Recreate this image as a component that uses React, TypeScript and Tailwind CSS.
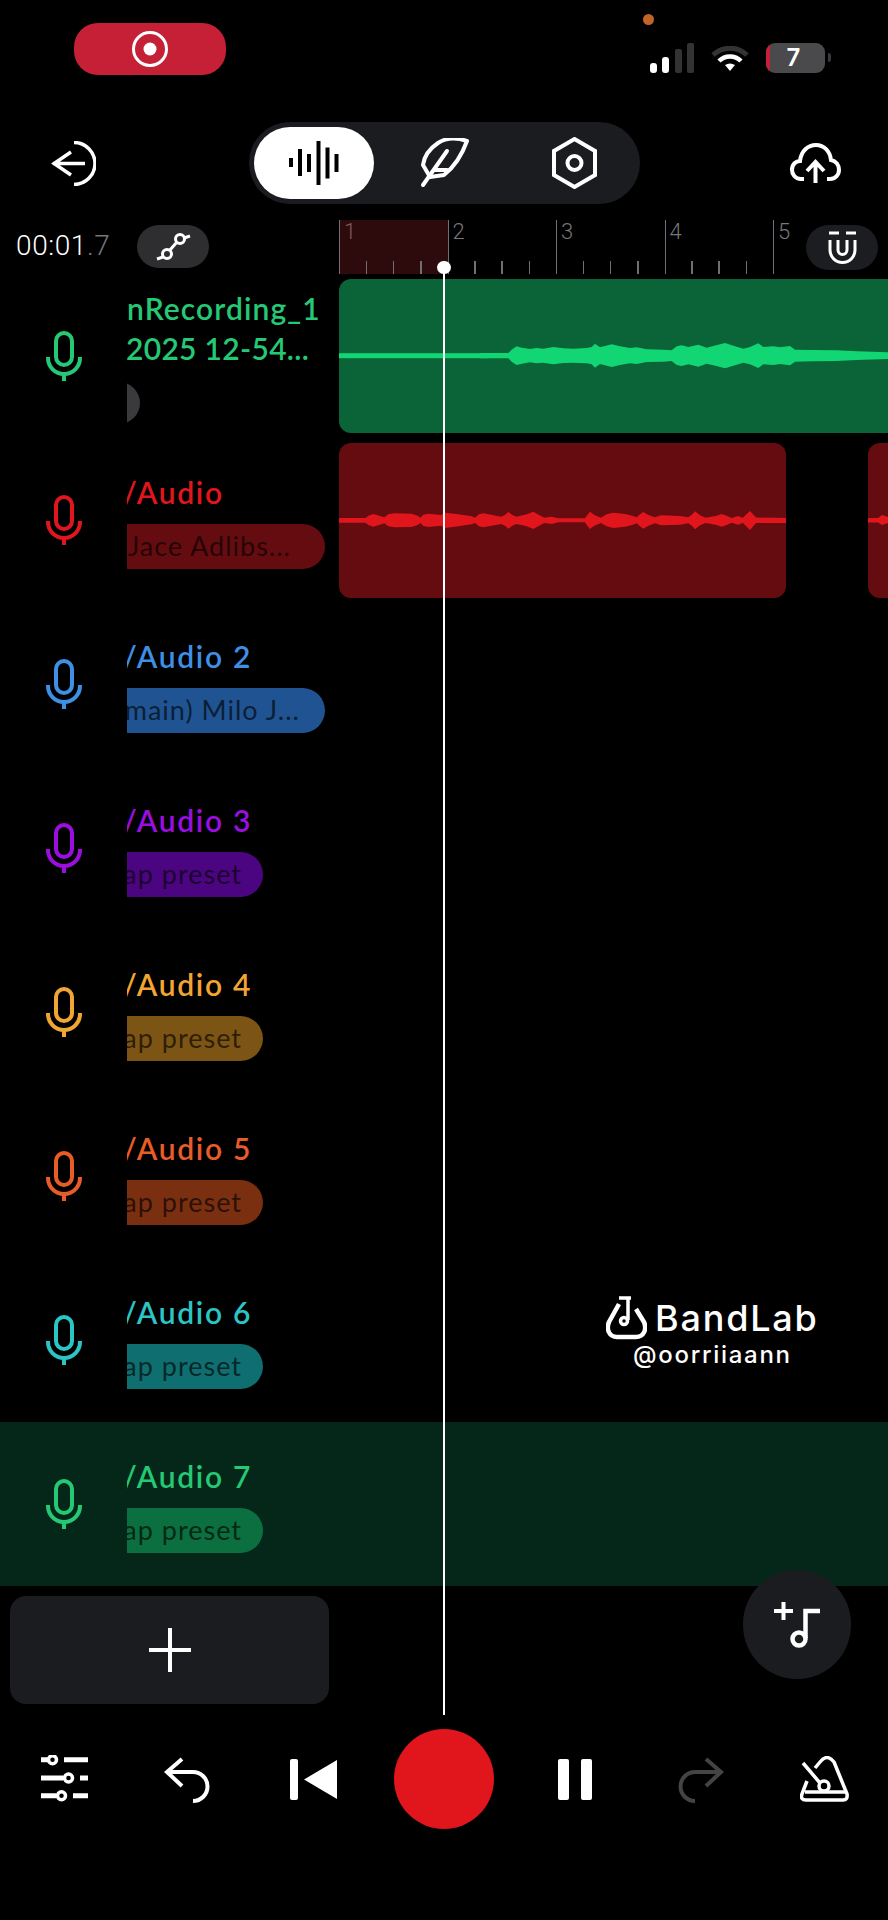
import React from "react";

type Pt = [number, number];

const greenWave: Pt[] = [[0,8],[85,8],[95,18],[110,28],[125,24],[150,20],[170,23],[190,21],[220,26],[250,22],[280,21],[320,23],[335,26],[345,36],[360,25],[375,29],[395,34],[420,28],[450,23],[470,25],[500,19],[550,18],[575,16],[590,28],[605,31],[625,26],[655,33],[680,24],[700,29],[735,38],[760,30],[790,21],[810,26],[835,37],[850,26],[880,28],[900,25],[930,29],[945,18],[1000,17],[1070,16],[1130,13],[1224,10]];
const redWave: Pt[] = [[12,7],[92,7],[100,14],[115,19],[132,14],[148,9],[160,18],[178,21],[230,20],[248,14],[256,8],[265,17],[280,20],[318,16],[330,23],[370,18],[410,12],[420,8],[432,18],[445,21],[498,11],[510,16],[520,25],[532,16],[545,11],[575,18],[595,26],[612,16],[628,8],[650,11],[670,6],[750,6],[757,16],[765,26],[778,16],[798,8],[815,18],[835,23],[870,19],[892,14],[905,9],[915,18],[925,25],[940,16],[960,9],[978,15],[1035,13],[1060,9],[1072,18],[1080,27],[1095,15],[1112,8],[1145,14],[1160,19],[1175,14],[1190,7],[1210,13],[1224,7]];

function envelope(pts: Pt[], ox: number, cy: number) {
  const top = pts.map(([x, h]) => `${ox + x / 3},${cy - h / 3}`);
  const bot = [...pts].reverse().map(([x, h]) => `${ox + x / 3},${cy + h / 3}`);
  return [...top, ...bot].join(" ");
}

function Mic({ color }: { color: string }) {
  return (
    <svg width="36" height="50" viewBox="0 0 36 50" fill="none" stroke={color} strokeWidth="4">
      <rect x="10" y="2" width="16" height="32" rx="8" />
      <path d="M2 26v1a16 16 0 0 0 32 0v-1" />
      <path d="M18 43v7" />
    </svg>
  );
}

const rows = [
  { title: ["nRecording_1", "2025 12-54..."], color: "#25c975", chip: "", chipBg: "#3a3a3c", chipW: "w-[42px] -ml-[29px]", pr: "" },
  { title: ["/Audio"], color: "#e0161c", chip: "Jace Adlibs...", chipBg: "#650c11", chipW: "w-[198px]", pr: "pr-[34px]" },
  { title: ["/Audio 2"], color: "#3f8fe4", chip: "main) Milo J...", chipBg: "#1f5391", chipW: "w-[198px]", pr: "pr-[25px]" },
  { title: ["/Audio 3"], color: "#9a0fe0", chip: "ap preset", chipBg: "#4c0580", chipW: "w-[136px]", pr: "pr-[21px]" },
  { title: ["/Audio 4"], color: "#f2a533", chip: "ap preset", chipBg: "#7c5414", chipW: "w-[136px]", pr: "pr-[21px]" },
  { title: ["/Audio 5"], color: "#e85c28", chip: "ap preset", chipBg: "#7a2f10", chipW: "w-[136px]", pr: "pr-[21px]" },
  { title: ["/Audio 6"], color: "#2cc5c5", chip: "ap preset", chipBg: "#0f6e70", chipW: "w-[136px]", pr: "pr-[21px]" },
  { title: ["/Audio 7"], color: "#25c975", chip: "ap preset", chipBg: "#0b6f3f", chipW: "w-[136px]", pr: "pr-[21px]" },
];

function titleClass(t: string) {
  if (t.startsWith("/")) return "-ml-[4px] tracking-[1.7px]";
  if (t.startsWith("2025")) return "-ml-[1px] tracking-[0.3px]";
  return "tracking-[1.1px]";
}

function Ruler() {
  return (
    <div className="flex h-[54px] flex-1">
      {[1, 2, 3, 4, 5].map((n) => (
        <div key={n} className={`relative h-full w-[108.5px] shrink-0 border-l-[1.5px] border-[#6f6f74] ${n === 1 ? "bg-[#2d0a0c]" : ""}`}>
          <span className={`block pl-[4px] text-[22px] leading-[24px] font-light font-['Roboto'] ${n === 1 ? "text-[#7c5a5c]" : "text-[#77777c]"}`}>{n}</span>
          {n < 5 && (
            <div className="absolute bottom-0 left-0 flex h-[13px] w-full justify-around px-[13px]">
              <i className="block h-full w-[1.5px] bg-[#6f6f74]" />
              <i className="block h-full w-[1.5px] bg-[#6f6f74]" />
              <i className="block h-full w-[1.5px] bg-[#6f6f74]" />
            </div>
          )}
        </div>
      ))}
    </div>
  );
}

function Row({ r, i }: { r: (typeof rows)[number]; i: number }) {
  return (
    <div className={`flex h-[164px] shrink-0 ${i === 7 ? "bg-[#052719]" : ""}`}>
      <div className="flex w-[127px] shrink-0 items-center justify-center">
        <Mic color={r.color} />
      </div>
      <div className={`flex w-[212px] shrink-0 flex-col overflow-hidden font-['Lato'] font-semibold ${i === 0 ? "pt-[14px]" : "pt-[34px]"}`} style={{ color: r.color }}>
        {r.title.map((t) => (
          <div key={t} className={`h-[40px] whitespace-nowrap text-[30px] leading-[40px] ${titleClass(t)}`}>{t}</div>
        ))}
        <div className={`${i === 0 ? "mt-[14px] h-[42px]" : "mt-[12px] h-[45px]"} ${r.chipW} ${r.pr} flex shrink-0 items-center justify-end overflow-hidden rounded-r-full`} style={{ background: r.chipBg }}>
          <span className="whitespace-nowrap text-[27px] font-normal tracking-[1px] text-black/65">{r.chip}</span>
        </div>
      </div>
      <div className="flex flex-1 items-center overflow-hidden">
        {i === 0 && (
          <div className="relative h-[154px] w-[600px] shrink-0 rounded-l-[12px] bg-[#0a6437]">
            <svg className="absolute inset-0" width="549" height="154" viewBox="339 280 549 154">
              <rect x="339" y="354.2" width="150" height="5" fill="#12d673" />
              <polygon points={envelope(greenWave, 480, 356.7)} fill="#12d673" />
            </svg>
          </div>
        )}
        {i === 1 && (
          <>
            <div className="relative h-[155px] w-[447px] shrink-0 rounded-[12px] bg-[#650c11]">
              <svg className="absolute inset-0" width="447" height="155" viewBox="339 443 447 155">
                <polygon points={envelope(redWave, 335, 520.3)} fill="#e0161c" />
                <polygon points="743,517.5 750,511 756,517.5 786,518 786,523 756,523 750,530 743,523" fill="#e0161c" />
              </svg>
            </div>
            <div className="relative ml-[82px] h-[155px] w-[60px] shrink-0 rounded-l-[12px] bg-[#650c11]">
              <svg className="absolute inset-0" width="60" height="155" viewBox="868 443 60 155">
                <polygon points="868,518 878,518 882,515 888,517 888,523 882,525 878,522.5 868,522.5" fill="#e0161c" />
              </svg>
            </div>
          </>
        )}
      </div>
    </div>
  );
}

export default function App() {
  return (
    <div className="relative flex h-[1920px] w-[888px] flex-col overflow-hidden bg-black font-['Lato'] text-white">
      {/* status bar */}
      <div className="relative flex h-[122px] shrink-0 items-start">
        <div className="ml-[74px] mt-[23px] flex h-[52px] w-[152px] items-center justify-center rounded-[24px] bg-[#c52035]">
          <svg width="38" height="38" viewBox="0 0 38 38" fill="none">
            <circle cx="19" cy="19" r="16.5" stroke="#fff" strokeWidth="3" />
            <circle cx="19" cy="19" r="6.5" fill="#fff" />
          </svg>
        </div>
        <div className="absolute left-[643px] top-[14px] h-[11px] w-[11px] rounded-full bg-[#c2642a]" />
        <div className="ml-[424px] mt-[43px] flex items-end gap-[17px]">
          <svg width="44" height="30" viewBox="0 0 44 30">
            <rect x="0" y="20" width="7" height="10" rx="3" fill="#fff" />
            <rect x="12" y="14" width="7" height="16" rx="3" fill="#fff" />
            <rect x="25" y="6" width="7" height="24" rx="2" fill="#333" />
            <rect x="37" y="0" width="7" height="30" rx="2" fill="#333" />
          </svg>
          <svg width="38" height="26" viewBox="0 0 38 26" fill="none" className="mb-[1px]">
            <path d="M2 9C12 0 26 0 36 9" stroke="#333" strokeWidth="5" />
            <path d="M8 15C14 9 24 9 30 15" stroke="#fff" strokeWidth="4.5" />
            <path d="M14 19Q19 16 24 19L19 25Z" fill="#fff" />
          </svg>
          <div className="relative flex h-[30px] w-[59px] items-center justify-center overflow-hidden rounded-[9px] bg-[#4a4a4c] pr-[4px]">
            <span className="absolute inset-y-0 left-0 w-[4px] bg-[#c52035]" />
            <span className="font-['Inter'] text-[24px] font-semibold leading-none">7</span>
          </div>
          <div className="-ml-[14px] mb-[11px] h-[9px] w-[3px] rounded-r-full bg-[#3a3a3c]" />
        </div>
      </div>

      {/* toolbar */}
      <div className="flex h-[82px] shrink-0 items-center pl-[51px]">
        <svg width="45" height="45" viewBox="0 0 45 45" fill="none" stroke="#fff" strokeWidth="3.5">
          <path d="M23 1.5A21 21 0 0 1 23 43.5" />
          <path d="M2 22.5H34M20 11L3 22.5L20 34" />
        </svg>
        <div className="ml-[153px] flex h-[82px] w-[391px] items-center rounded-full bg-[#1b1c20] pl-[5px]">
          <div className="flex h-[72px] w-[120px] items-center justify-center rounded-full bg-white">
            <svg width="50" height="46" viewBox="0 0 50 46" fill="#000">
              <rect x="0" y="18" width="4" height="9" />
              <rect x="9" y="9" width="4" height="27" />
              <rect x="18" y="14" width="4" height="18" />
              <rect x="27.5" y="1" width="4" height="44" />
              <rect x="36.5" y="7.5" width="4" height="31" />
              <rect x="45.5" y="14" width="4" height="18" />
            </svg>
          </div>
          <svg className="ml-[46px]" width="50" height="50" viewBox="0 0 50 50" fill="none" stroke="#fff" strokeWidth="4" strokeLinecap="round" strokeLinejoin="round">
            <path d="M47 3C38 0 27 -1 18 5C9 11 4 19 3 27L10 39L24 37C34 29 42 17 47 3Z" />
            <path d="M3 47L27 13M14 32H27" />
          </svg>
          <svg className="ml-[82px]" width="45" height="52" viewBox="0 0 45 52" fill="none" stroke="#fff" strokeWidth="4">
            <polygon points="22.5,2 43,14 43,38 22.5,50 2,38 2,14" />
            <circle cx="22.5" cy="26" r="7" />
          </svg>
        </div>
        <svg className="ml-[150px]" width="51" height="40" viewBox="0 0 51 40" fill="none" stroke="#fff" strokeWidth="4">
          <path d="M14 36H11C5 36 2 31 2 27C2 21 6 18 10 18C11 8 18 2 26 2C34 2 40 8 41 17C46 18 49 22 49 27C49 32 45 36 40 36H37" />
          <path d="M25.5 40V20M17 28L25.5 19L34 28" />
        </svg>
      </div>

      {/* time + ruler */}
      <div className="mt-[16px] flex h-[54px] shrink-0">
        <div className="flex w-[339px] shrink-0 items-start pl-[16px] pt-[5px]">
          <div className="mt-[6px] w-[104px] whitespace-nowrap font-['Roboto'] text-[28px] font-light leading-[30px] tracking-[0.6px] text-white">
            00:01<span className="text-[#77777c]">.7</span>
          </div>
          <div className="ml-[17px] flex h-[43px] w-[72px] items-center justify-center rounded-full bg-[#2e2e30]">
            <svg width="36" height="30" viewBox="0 0 36 30" fill="none" stroke="#fff" strokeWidth="3">
              <path d="M2 27L8 25M15 18L22 10M29 6L35 4" />
              <circle cx="12" cy="22" r="4.5" />
              <circle cx="25" cy="7" r="4.5" />
            </svg>
          </div>
        </div>
        <Ruler />
      </div>

      {/* tracks */}
      <div className="flex shrink-0 flex-col">
        {rows.map((r, i) => (
          <Row key={i} r={r} i={i} />
        ))}
      </div>

      {/* add track */}
      <div className="ml-[10px] mt-[10px] flex h-[108px] w-[319px] shrink-0 items-center justify-center rounded-[16px] bg-[#1b1c20]">
        <svg width="42" height="44" viewBox="0 0 42 44" stroke="#fff" strokeWidth="4">
          <path d="M0 22H42M21 0V44" />
        </svg>
      </div>

      {/* transport */}
      <div className="mt-[25px] flex h-[100px] shrink-0 items-center pl-[41px]">
        <svg width="47" height="48" viewBox="0 0 47 48" fill="none" stroke="#fff" strokeWidth="5">
          <path d="M0 4.7H7M23 4.7H47M0 23H22M39 23H47M0 40.7H15M32 40.7H47" />
          <g fill="#000" strokeWidth="3.5">
            <circle cx="11.5" cy="4.7" r="4" />
            <circle cx="27.5" cy="23" r="4" />
            <circle cx="20.5" cy="40.7" r="4" />
          </g>
        </svg>
        <svg className="ml-[76px]" width="47" height="47" viewBox="0 0 47 47" fill="none" stroke="#fff" strokeWidth="4">
          <path d="M18 3L3 16L18 30M3 16H29A14.5 14.5 0 0 1 29 45" />
        </svg>
        <svg className="ml-[79px]" width="47" height="41" viewBox="0 0 47 41" fill="#fff">
          <rect x="0" y="0" width="8" height="41" rx="2" />
          <path d="M47 1V40L14 20.5Z" />
        </svg>
        <div className="ml-[57px] h-[100px] w-[100px] rounded-full bg-[#e0161c]" />
        <div className="ml-[64px] flex h-[41px] gap-[12px]">
          <div className="h-full w-[11px] rounded-[2px] bg-white" />
          <div className="h-full w-[11px] rounded-[2px] bg-white" />
        </div>
        <svg className="ml-[85px]" width="47" height="47" viewBox="0 0 47 47" fill="none" stroke="#444" strokeWidth="4">
          <path d="M29 3L44 16L29 30M44 16H18A14.5 14.5 0 0 0 18 45" />
        </svg>
        <svg className="ml-[76px]" width="49" height="46" viewBox="0 0 49 46" fill="none" stroke="#fff" strokeWidth="3.5" strokeLinejoin="round">
          <path d="M15 12L20 6Q27 -3 34 6L47 38Q48 44 43 44H6Q0 44 2 38L7 25" />
          <path d="M5 36H45M3 7L20 27" />
          <circle cx="24" cy="30" r="5" />
        </svg>
      </div>

      {/* overlays */}
      <div className="absolute right-[10px] top-[225px] flex h-[45px] w-[72px] items-center justify-center rounded-full bg-[#1c1d20]">
        <svg width="29" height="33" viewBox="0 0 29 33" fill="none" stroke="#fff" strokeWidth="3">
          <path d="M1 2H11M18 2H28" />
          <path d="M2 9V19A12.5 12.5 0 0 0 27 19V9M10 9V19A4.5 4.5 0 0 0 19 19V9" />
        </svg>
      </div>

      <div className="absolute left-[443px] top-[268px] h-[1447px] w-[2px] bg-white" />
      <div className="absolute left-[437px] top-[261px] h-[13px] w-[14px] rounded-full bg-white" />

      <div className="absolute left-[743px] top-[1570px] flex h-[109px] w-[108px] items-center justify-center rounded-full bg-[#1b1c20]">
        <svg width="48" height="50" viewBox="0 0 48 50" fill="none" stroke="#fff" strokeWidth="4.5">
          <path d="M1 11H20M10.5 2V20" strokeWidth="4" />
          <path d="M47 11H32.5V38" />
          <circle cx="26" cy="39" r="6.5" />
        </svg>
      </div>

      <div className="absolute left-[606px] top-[1296px] flex flex-col items-start font-['Inter']">
        <div className="flex items-center">
          <svg width="41" height="44" viewBox="0 0 41 44" fill="none" stroke="#fff" strokeWidth="4.5">
            <path d="M13 8L3 26C0 33 3 41 11 41H30C38 41 41 33 38 26L30 13" />
            <path d="M13 2H25M22 2V24" strokeWidth="3.5" />
            <circle cx="18" cy="25" r="3.5" strokeWidth="3.5" />
          </svg>
          <span className="ml-[8px] whitespace-nowrap text-[36px] font-medium leading-[44px] tracking-[1.8px]">BandLab</span>
        </div>
        <div className="ml-[27px] mt-[1px] whitespace-nowrap text-[24px] font-medium leading-[28px] tracking-[1.7px]">@oorriiaann</div>
      </div>
    </div>
  );
}
